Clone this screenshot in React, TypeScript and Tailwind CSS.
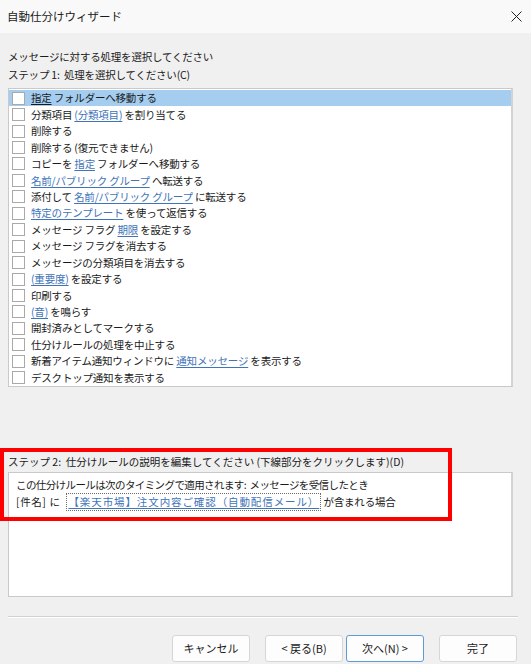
import React from "react";

type Seg = { t: string; link?: boolean };

const actions: Seg[][] = [
  [{ t: "指定", link: true }, { t: " フォルダーへ移動する" }],
  [{ t: "分類項目 " }, { t: "(分類項目)", link: true }, { t: " を割り当てる" }],
  [{ t: "削除する" }],
  [{ t: "削除する (復元できません)" }],
  [{ t: "コピーを " }, { t: "指定", link: true }, { t: " フォルダーへ移動する" }],
  [{ t: "名前/パブリック グループ", link: true }, { t: " へ転送する" }],
  [{ t: "添付して " }, { t: "名前/パブリック グループ", link: true }, { t: " に転送する" }],
  [{ t: "特定のテンプレート", link: true }, { t: " を使って返信する" }],
  [{ t: "メッセージ フラグ " }, { t: "期限", link: true }, { t: " を設定する" }],
  [{ t: "メッセージ フラグを消去する" }],
  [{ t: "メッセージの分類項目を消去する" }],
  [{ t: "(重要度)", link: true }, { t: " を設定する" }],
  [{ t: "印刷する" }],
  [{ t: "(音)", link: true }, { t: " を鳴らす" }],
  [{ t: "開封済みとしてマークする" }],
  [{ t: "仕分けルールの処理を中止する" }],
  [{ t: "新着アイテム通知ウィンドウに " }, { t: "通知メッセージ", link: true }, { t: " を表示する" }],
  [{ t: "デスクトップ通知を表示する" }],
];

function ActionRow({ segs, selected }: { segs: Seg[]; selected?: boolean }) {
  return (
    <div className={`flex h-[16.45px] items-center pl-[3px] ${selected ? "bg-[#a4cdf0]" : ""}`}>
      <span className="mr-[6px] h-[13px] w-[13px] shrink-0 border border-[#a9a9a9] bg-white" />
      <span className="whitespace-pre">
        {segs.map((s, i) =>
          s.link ? (
            <span
              key={i}
              className={`underline underline-offset-2 ${selected ? "text-[#1a1a1a]" : "text-[#3f74b8]"}`}
            >
              {s.t}
            </span>
          ) : (
            <span key={i}>{s.t}</span>
          ),
        )}
      </span>
    </div>
  );
}

function WizButton({ label, primary }: { label: string; primary?: boolean }) {
  return (
    <button
      className={`h-[27px] w-[78px] rounded-[3px] border bg-[#fdfdfd] text-[11px] ${
        primary ? "border-[#5e9ad6]" : "border-[#d6d6d6]"
      }`}
    >
      {label}
    </button>
  );
}

export default function App() {
  return (
    <div
      className="relative h-[664px] w-[531px] overflow-hidden bg-[#f0f0f0] text-[10.5px] tracking-[-0.2px] text-[#1a1a1a]"
      style={{ fontFamily: '"Noto Sans CJK JP", "Noto Sans", sans-serif' }}
    >
      {/* title bar */}
      <div className="flex h-[33px] items-center justify-between bg-[#f9f9f9] pl-[7px] pr-[8px]">
        <span className="text-[11.5px] tracking-normal">自動仕分けウィザード</span>
        <svg width="11" height="11" viewBox="0 0 11 11" className="mr-[1px]">
          <path d="M0.5 0.5L10.5 10.5M10.5 0.5L0.5 10.5" stroke="#222" strokeWidth="1" />
        </svg>
      </div>

      <div className="px-[8px]">
        <div className="mt-[16px] flex h-[16px] items-center">メッセージに対する処理を選択してください</div>
        <div className="mt-[2px] flex h-[16px] items-center whitespace-pre">ステップ 1:  処理を選択してください(C)</div>

        <div className="mt-[5px] h-[299px] w-[505px] border border-[#c9c9c9] border-r-2 border-r-[#d3d3d3] bg-white pt-[1px]">
          {actions.map((segs, i) => (
            <ActionRow key={i} segs={segs} selected={i === 0} />
          ))}
        </div>

        <div className="mt-[67px] flex h-[16px] items-center whitespace-pre tracking-normal">
          ステップ 2:  仕分けルールの説明を編集してください (下線部分をクリックします)(D)
        </div>
        <div className="mt-[2px] h-[125px] w-[505px] border border-[#c9c9c9] border-r-2 border-r-[#d3d3d3] bg-white px-[7px] pt-[4px]">
          <div className="flex h-[16px] items-center whitespace-pre tracking-[-0.6px]">
            この仕分けルールは次のタイミングで適用されます:  メッセージを受信したとき
          </div>
          <div className="flex h-[18px] items-center whitespace-pre">
            <span className="tracking-[0.6px]">[件名] に  </span>
            <span className="border border-dotted border-[#6b6b6b] px-[1px] tracking-[0.9px] text-[#3f74b8] underline underline-offset-2">
              【楽天市場】注文内容ご確認（自動配信メール）
            </span>
            <span> が含まれる場合</span>
          </div>
        </div>

        <div className="mt-[19px] h-[2px] w-[510px] border-t border-[#d0d0d0] bg-white" />

        <div className="mt-[17px] flex justify-end gap-[15px] pr-[6px] tracking-normal">
          <WizButton label="キャンセル" />
          <div className="flex gap-[3px]">
            <WizButton label="< 戻る(B)" />
            <WizButton label="次へ(N) >" primary />
          </div>
          <WizButton label="完了" />
        </div>
      </div>

      {/* annotation highlight */}
      <div className="pointer-events-none absolute left-0 top-[448px] h-[73px] w-[452px] border-[4px] border-[#ff0000]" />
    </div>
  );
}
